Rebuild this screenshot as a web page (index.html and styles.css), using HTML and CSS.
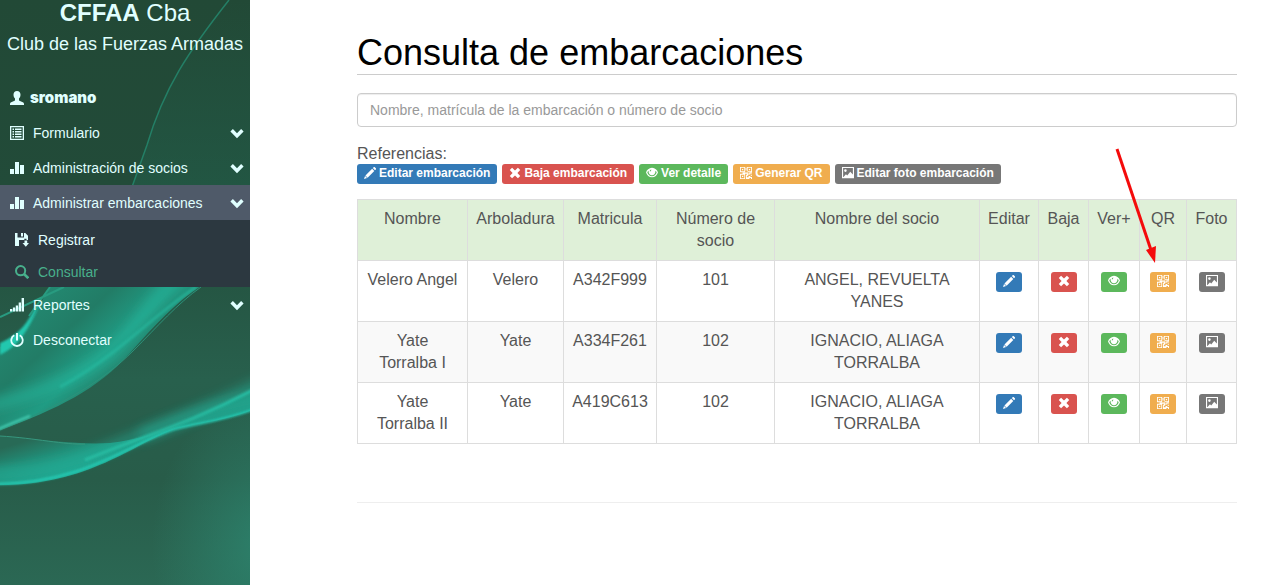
FILE: index.html
```html
<!DOCTYPE html>
<html lang="es">
<head>
<meta charset="utf-8">
<title>Consulta de embarcaciones</title>
<link rel="stylesheet" href="styles.css">
</head>
<body>
<svg class="sprite" aria-hidden="true">
  <symbol id="user" viewBox="0 0 14 14"><path d="M7 0c2.200 0 3.500 1.500 3.500 3.800 0 1.500-.6 2.900-1.500 3.800v1.300c0 .5.400.8 1 1.100l2.800 1.200c.8.400 1.200.9 1.200 1.800v1H0v-1c0-.9.400-1.400 1.200-1.800L4 10c.6-.3 1-.6 1-1.100V7.600c-.9-.9-1.500-2.300-1.500-3.800C3.500 1.500 4.800 0 7 0z"/></symbol>
  <symbol id="list" viewBox="0 0 14 14"><path fill-rule="evenodd" d="M0 0h14v14H0zM1.300 1.300v11.400h11.400V1.300z"/><path d="M2.500 2.500h1.500v1.500H2.500zM5 2.500h6.500v1.500H5zM2.500 5h1.500v1.500H2.500zM5 5h6.500v1.500H5zM2.500 7.500h1.500v1.500H2.500zM5 7.500h6.500v1.500H5zM2.500 10h1.500v1.500H2.500zM5 10h6.500v1.500H5z"/></symbol>
  <symbol id="stats" viewBox="0 0 14 14"><path d="M0 8h4v5H0zM5 1h4v12H5zM10 4h4v9h-4z"/></symbol>
  <symbol id="signal" viewBox="0 0 14 14"><path d="M0 11h2.300v2.500H0zM2.900 9.500h2.300v4H2.900zM5.800 7.500h2.300v6H5.800zM8.700 4.500H11v9H8.700zM11.600 0H14v13.500h-2.400z"/></symbol>
  <symbol id="save" viewBox="0 0 14 14"><path fill-rule="evenodd" d="M0 0h2.500v4.500H9V0h1.300L13 2.700V7h-1.500V5.800H9.300V7H4v6H0zM6 0h2v3.500H6zM9.500 7.500h2.700V10H14l-3.200 3.800L7.500 10h2z"/></symbol>
  <symbol id="search" viewBox="0 0 14 14"><path fill="none" stroke="currentColor" stroke-width="2" d="M10.200 5.700a4.600 4.600 0 1 1-9.200 0 4.600 4.600 0 0 1 9.200 0z"/><path fill="none" stroke="currentColor" stroke-width="2.600" d="m9 9 4.300 4.200"/></symbol>
  <symbol id="off" viewBox="0 0 14 14"><path fill="none" stroke="currentColor" stroke-width="1.800" d="M4.300 2.300a5.700 5.700 0 1 0 5.400 0"/><path d="M6 0h2v7.500H6z"/></symbol>
  <symbol id="chevron" viewBox="0 0 14 14"><path d="M.4 5.600 2.900 3.100 7 7.200l4.100-4.100 2.500 2.500L7 12.200z"/></symbol>
  <symbol id="pencil" viewBox="0 0 14 14"><path d="m10.300 1.300 1-1c.4-.4.900-.4 1.300 0l1.200 1.200c.4.400.4.900 0 1.300l-1 1zM9.500 2.100 12 4.600 4.200 12.400 1.700 9.900zM1.200 10.500l2.400 2.400L0 14z"/></symbol>
  <symbol id="remove" viewBox="0 0 14 14"><path d="M3.600.9 7 4.200 10.400.9l2.700 2.700L9.800 7l3.300 3.400-2.700 2.700L7 9.800l-3.400 3.300-2.700-2.700L4.200 7 .9 3.600z"/></symbol>
  <symbol id="eye" viewBox="0 0 14 14"><path fill-rule="evenodd" d="M7 1c3.500 0 6 2.600 7 5.300-1 3-3.500 5.700-7 5.700S1 9.300 0 6.300C1 3.600 3.500 1 7 1zM3 4.300c-.7.600-1.200 1.300-1.500 2C2.500 8.900 4.500 10.700 7 10.700s4.500-1.800 5.500-4.400c-.3-.7-.8-1.400-1.500-2 .3 3-1.600 5.300-4 5.300S2.700 7.300 3 4.300zM6.200 2.800c-1.100.2-1.900 1.200-1.900 2.200.8.6 1.900-.7 1.900-2.200z"/></symbol>
  <symbol id="qr" viewBox="0 0 14 14"><path fill-rule="evenodd" d="M0 0h6v6H0zM1 1v4h4V1zM2.300 2.300h1.500v1.500H2.300zM8 0h6v6H8zM9 1v4h4V1zM10.300 2.300h1.500v1.500h-1.500zM0 8h6v6H0zM1 9v4h4V9zM2.300 10.300h1.500v1.500H2.300zM6.500 1h1v3h-1zM3 6.500h5V5h1v2.500h2v-1h3v1h-2v1.300H9.500v1.400H8V8H3zM7 9h1v3h2v-1.500h2v1.200h2V14h-1.200v-1.200H11V14H7zM12.500 9H14v1.200h-1.500z"/></symbol>
  <symbol id="picture" viewBox="0 0 14 14"><path fill-rule="evenodd" d="M0 0h14v13H0zM1.300 1.300v10.400h.5l2.800-3.200 1.500 1.300 3.500-4.200 3.100 3.200V1.300zM5.500 4.200a1.500 1.500 0 1 1-3 0 1.500 1.500 0 0 1 3 0z"/></symbol>
</svg>
<div class="layout">
  <aside class="sidebar">
    <svg class="sidebar-art" viewBox="0 0 250 585" preserveAspectRatio="none" aria-hidden="true">
      <defs>
        <linearGradient id="base" x1="0" y1="0" x2="0" y2="1"><stop offset="0" stop-color="#224936"/><stop offset=".32" stop-color="#224b39"/><stop offset=".65" stop-color="#28604d"/><stop offset=".82" stop-color="#285c49"/><stop offset="1" stop-color="#2b6854"/></linearGradient>
        <radialGradient id="glow" gradientUnits="userSpaceOnUse" cx="0" cy="0" r="1" gradientTransform="translate(262 545) scale(110 150)"><stop offset="0" stop-color="#2d8670" stop-opacity=".8"/><stop offset="1" stop-color="#2d8670" stop-opacity="0"/></radialGradient>
        <linearGradient id="haze" x1="0" y1="0" x2="0" y2="1"><stop offset="0" stop-color="#22705a" stop-opacity="0"/><stop offset="1" stop-color="#22705a" stop-opacity=".3"/></linearGradient>
        <linearGradient id="ribbon" gradientUnits="userSpaceOnUse" x1="20" y1="300" x2="110" y2="400"><stop offset="0" stop-color="#238b73"/><stop offset=".4" stop-color="#227c66"/><stop offset=".7" stop-color="#219b83"/><stop offset="1" stop-color="#287963"/></linearGradient>
        <linearGradient id="wave" gradientUnits="userSpaceOnUse" x1="60" y1="430" x2="75" y2="478"><stop offset="0" stop-color="#286a56"/><stop offset=".4" stop-color="#228d77"/><stop offset="1" stop-color="#20ae98"/></linearGradient>
        <filter id="soft" filterUnits="userSpaceOnUse" x="-60" y="200" width="370" height="385"><feGaussianBlur stdDeviation="6"/></filter>
        <filter id="fine" filterUnits="userSpaceOnUse" x="-60" y="200" width="370" height="385"><feGaussianBlur stdDeviation="1"/></filter>
      </defs>
      <path fill="url(#base)" d="M0 0h250v585H0z"/>
      <path fill="url(#haze)" d="M229 0C188 52 164 88 147 145l-15 42h118V0z"/>
      <path fill="none" stroke="#247f66" stroke-width="1.500" d="M229 0C188 52 164 88 147 145l-15 42"/>
      <path fill="url(#glow)" d="M100 390h150v195H100z"/>
      <path fill="url(#ribbon)" d="M50 287c-9 12-14 32-28 43Q10 342 0 347v83c58-21 98-41 130-77 25-28 47-52 71-67z"/>
      <path fill="none" stroke="#27bca2" stroke-width="11" opacity=".6" filter="url(#soft)" d="M180 275c-32 25-46 60-75 82-35 24-65 36-120 50"/>
      <path fill="none" stroke="#27bda3" stroke-width="3" opacity=".6" filter="url(#fine)" d="M196 287c-35 24-55 44-84 66-22 17-37 26-52 34"/>
      <path fill="#22c7ae" filter="url(#fine)" d="M36 305c-9 21-20 31-36 38v12c20-10 29-27 39-49z"/>
      <path fill="none" stroke="#289b80" stroke-width="2" d="M64 287 0 317M50 287l-21 29"/>
      <path fill="none" stroke="#2c927a" d="M201 287c-24 17-43 39-68 64-30 30-72 55-133 79"/>
      <path fill="none" stroke="#45cdb2" stroke-width="2" filter="url(#fine)" d="M-4 430q21-9 34-14"/>
      <path fill="none" stroke="#25bba3" stroke-width="12" opacity=".45" filter="url(#soft)" d="M140 436Q192 416 270 380"/>
      <path fill="url(#wave)" d="M0 436c40 3 75 9 110 7 52-6 90-27 140-52v20c-32 11-47 11-75 18-42 15-86 56-175 56z"/>
      <path fill="none" stroke="#22baa2" stroke-width="8" opacity=".6" filter="url(#soft)" d="M-20 474c115 0 146-50 290-80"/>
      <path fill="none" stroke="#27cfb7" stroke-width="2" filter="url(#fine)" d="M-5 484c92 0 138-43 180-55 28-7 43-7 80-20"/>
      <path fill="none" stroke="#27bca2" stroke-width="3" filter="url(#fine)" d="M85 460c63-26 101-35 170-71"/>
      <path fill="none" stroke="#36977e" d="M0 436c35 2 65 9 85 8"/>
    </svg>
    <header class="brand">
      <p class="brand-name"><strong>CFFAA</strong> Cba</p>
      <p class="brand-sub">Club de las Fuerzas Armadas</p>
    </header>
    <nav class="menu">
      <a class="item user" href="#"><svg class="icon"><use href="#user"/></svg><strong>sromano</strong></a>
      <a class="item" href="#"><svg class="icon"><use href="#list"/></svg><span>Formulario</span><svg class="icon arrow"><use href="#chevron"/></svg></a>
      <a class="item" href="#"><svg class="icon"><use href="#stats"/></svg><span>Administración de socios</span><svg class="icon arrow"><use href="#chevron"/></svg></a>
      <a class="item active" href="#"><svg class="icon"><use href="#stats"/></svg><span>Administrar embarcaciones</span><svg class="icon arrow"><use href="#chevron"/></svg></a>
      <div class="submenu">
        <a class="subitem" href="#"><svg class="icon"><use href="#save"/></svg><span>Registrar</span></a>
        <a class="subitem current" href="#"><svg class="icon"><use href="#search"/></svg><span>Consultar</span></a>
      </div>
      <a class="item" href="#"><svg class="icon"><use href="#signal"/></svg><span>Reportes</span><svg class="icon arrow"><use href="#chevron"/></svg></a>
      <a class="item" href="#"><svg class="icon"><use href="#off"/></svg><span>Desconectar</span></a>
    </nav>
  </aside>
  <main class="content">
    <h1 class="title">Consulta de embarcaciones</h1>
    <input class="search" type="text" aria-label="Buscar embarcación" placeholder="Nombre, matrícula de la embarcación o número de socio">
    <p class="legend-title">Referencias:</p>
    <div class="legend">
      <span class="label blue"><svg class="glyph"><use href="#pencil"/></svg>Editar embarcación</span>
      <span class="label red"><svg class="glyph"><use href="#remove"/></svg>Baja embarcación</span>
      <span class="label green"><svg class="glyph"><use href="#eye"/></svg>Ver detalle</span>
      <span class="label orange"><svg class="glyph"><use href="#qr"/></svg>Generar QR</span>
      <span class="label gray"><svg class="glyph"><use href="#picture"/></svg>Editar foto embarcación</span>
    </div>
    <div class="table-wrap">
      <table class="table">
        <colgroup><col class="c-name"><col class="c-rig"><col class="c-plate"><col class="c-num"><col class="c-owner"><col class="c-edit"><col class="c-drop"><col class="c-view"><col class="c-qr"><col class="c-photo"></colgroup>
        <thead>
          <tr><th>Nombre</th><th>Arboladura</th><th>Matricula</th><th>Número de socio</th><th>Nombre del socio</th><th>Editar</th><th>Baja</th><th>Ver+</th><th>QR</th><th>Foto</th></tr>
        </thead>
        <tbody>
          <tr><td>Velero Angel</td><td>Velero</td><td>A342F999</td><td>101</td><td>ANGEL, REVUELTA YANES</td>
            <td><button class="label blue" aria-label="Editar"><svg class="glyph"><use href="#pencil"/></svg></button></td>
            <td><button class="label red" aria-label="Baja"><svg class="glyph"><use href="#remove"/></svg></button></td>
            <td><button class="label green" aria-label="Ver detalle"><svg class="glyph"><use href="#eye"/></svg></button></td>
            <td><button class="label orange" aria-label="Generar QR"><svg class="glyph"><use href="#qr"/></svg></button></td>
            <td><button class="label gray" aria-label="Editar foto"><svg class="glyph"><use href="#picture"/></svg></button></td></tr>
          <tr><td>Yate Torralba I</td><td>Yate</td><td>A334F261</td><td>102</td><td>IGNACIO, ALIAGA TORRALBA</td>
            <td><button class="label blue" aria-label="Editar"><svg class="glyph"><use href="#pencil"/></svg></button></td>
            <td><button class="label red" aria-label="Baja"><svg class="glyph"><use href="#remove"/></svg></button></td>
            <td><button class="label green" aria-label="Ver detalle"><svg class="glyph"><use href="#eye"/></svg></button></td>
            <td><button class="label orange" aria-label="Generar QR"><svg class="glyph"><use href="#qr"/></svg></button></td>
            <td><button class="label gray" aria-label="Editar foto"><svg class="glyph"><use href="#picture"/></svg></button></td></tr>
          <tr><td>Yate Torralba II</td><td>Yate</td><td>A419C613</td><td>102</td><td>IGNACIO, ALIAGA TORRALBA</td>
            <td><button class="label blue" aria-label="Editar"><svg class="glyph"><use href="#pencil"/></svg></button></td>
            <td><button class="label red" aria-label="Baja"><svg class="glyph"><use href="#remove"/></svg></button></td>
            <td><button class="label green" aria-label="Ver detalle"><svg class="glyph"><use href="#eye"/></svg></button></td>
            <td><button class="label orange" aria-label="Generar QR"><svg class="glyph"><use href="#qr"/></svg></button></td>
            <td><button class="label gray" aria-label="Editar foto"><svg class="glyph"><use href="#picture"/></svg></button></td></tr>
        </tbody>
      </table>
      <svg class="pointer" viewBox="0 0 52 120" aria-hidden="true"><path stroke="#f40b0b" stroke-width="3" d="M7 4l35 104"/><path fill="#f40b0b" d="m36 105 10-4-1 17z"/></svg>
    </div>
    <hr class="divider">
  </main>
</div>
</body>
</html>
```
FILE: styles.css
```css
* { box-sizing: border-box; }
body { margin: 0; font-family: "Liberation Sans", Arial, sans-serif; font-size: 16px; line-height: 22px; color: #555; background: #fff; }
p, h1 { margin: 0; }
a { color: inherit; text-decoration: none; }
.sprite { display: none; }
.layout { display: flex; min-height: 100vh; }

.sidebar { position: relative; isolation: isolate; flex: 0 0 250px; color: #e0ffff; background: #224936; }
.sidebar-art { position: absolute; inset: 0; z-index: -1; width: 100%; height: 100%; }
.brand { padding-bottom: 24px; text-align: center; white-space: nowrap; }
.brand-name { font-size: 24px; line-height: 26px; }
.brand-sub { padding-top: 6px; font-size: 18px; line-height: 24px; }
.brand strong { font-weight: 700; }
.user strong { font-family: Inter, "Liberation Sans", sans-serif; font-weight: 900; }
.menu { font-size: 14px; line-height: 20px; }
.item { display: flex; align-items: center; gap: 9px; height: 35px; padding: 0 6px 0 10px; }
.user { gap: 6px; font-size: 15px; }
.active { background: #4f5a69; }
.icon { width: 14px; height: 14px; flex: none; fill: currentColor; }
.arrow { margin-left: auto; }
.submenu { padding-top: 3px; background: #2c3840; }
.subitem { display: flex; align-items: center; gap: 9px; height: 32px; padding: 2px 0 0 15px; }
.current { color: #48b08c; }

.content { flex: 1; min-width: 0; padding: 33px 38px 0 107px; }
.title { padding-bottom: 1px; border-bottom: 1px solid #ccc; font-size: 36px; line-height: 40px; font-weight: 400; color: #000; }
.search { display: block; width: 100%; height: 34px; margin: 18px 0 16px; padding: 6px 12px; border: 1px solid #ccc; border-radius: 4px; box-shadow: inset 0 1px 1px rgba(0, 0, 0, .075); font: 14px/20px "Liberation Sans", Arial, sans-serif; }
.search::placeholder { color: #999; opacity: 1; }
.legend { display: flex; flex-wrap: wrap; gap: 5px; margin-bottom: 15px; }
.legend-title { line-height: 21px; }
.label { display: inline-flex; align-items: flex-start; gap: 3px; height: 20px; padding: 3px 7px; border: 0; border-radius: 3px; color: #fff; font: bold 12px/12px "Liberation Sans", Arial, sans-serif; }
.blue { background: #337ab7; }
.red { background: #d9534f; }
.green { background: #5cb85c; }
.orange { background: #f0ad4e; }
.gray { background: #777; }
.glyph { width: 12px; height: 12px; flex: none; fill: currentColor; }

.table-wrap { position: relative; }
.table { width: 100%; table-layout: fixed; border-collapse: collapse; text-align: center; }
.table th, .table td { padding: 8px; border: 1px solid #ddd; vertical-align: top; font-weight: 400; }
.table thead { background: #dff0d8; }
.table tbody tr:nth-child(even) { background: #f9f9f9; }
.table .label { margin-top: 3px; vertical-align: top; }
.c-name { width: 110px; }
.c-rig { width: 96px; }
.c-plate { width: 93px; }
.c-num { width: 118px; }
.c-owner { width: 205px; }
.c-edit { width: 59px; }
.c-drop, .c-photo { width: 50px; }
.c-view { width: 51px; }
.c-qr { width: 47px; }
.pointer { position: absolute; top: -54px; right: 75px; width: 52px; height: 120px; pointer-events: none; }
.divider { margin: 58px 0 20px; border: 0; border-top: 1px solid #eee; }
```
